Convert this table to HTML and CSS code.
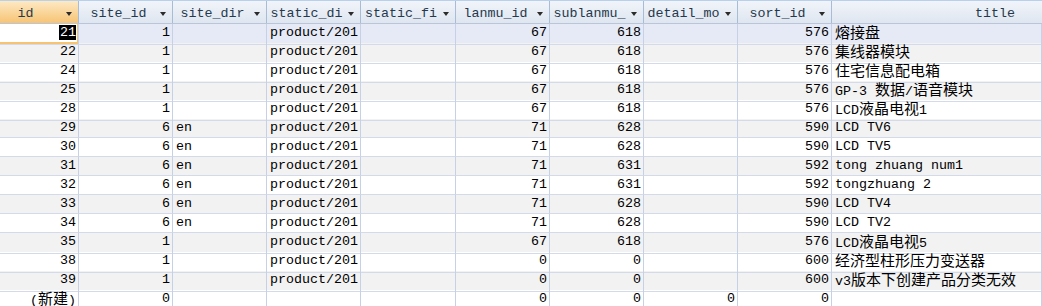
FILE: index.html
```html
<!DOCTYPE html>
<html lang="zh">
<head>
  <meta charset="UTF-8" />
  <title>product 数据表</title>
  <link rel="stylesheet" href="styles.css">
</head>
<body>
  <div class="sheet">
    <div class="row head">
      <div class="hd sel id-hd"><span class="hd-text">id</span><i class="arrow"></i></div>
      <div class="hd"><span class="hd-text">site_id</span><i class="arrow"></i></div>
      <div class="hd"><span class="hd-text">site_dir</span><i class="arrow"></i></div>
      <div class="hd"><span class="hd-text">static_di</span><i class="arrow"></i></div>
      <div class="hd"><span class="hd-text">static_fi</span><i class="arrow"></i></div>
      <div class="hd"><span class="hd-text">lanmu_id</span><i class="arrow"></i></div>
      <div class="hd"><span class="hd-text">sublanmu_</span><i class="arrow"></i></div>
      <div class="hd"><span class="hd-text">detail_mo</span><i class="arrow"></i></div>
      <div class="hd"><span class="hd-text">sort_id</span><i class="arrow"></i></div>
      <div class="hd last"><span class="hd-text">title</span></div>
    </div>

    <div class="row current">
      <div class="cell num focus"><span class="mark">21</span></div>
      <div class="cell num">1</div><div class="cell"></div><div class="cell">product/201</div><div class="cell"></div>
      <div class="cell num">67</div><div class="cell num">618</div><div class="cell"></div><div class="cell num">576</div>
      <div class="cell"><span class="zh">熔接盘</span></div>
    </div>
    <div class="row alt">
      <div class="cell num">22</div>
      <div class="cell num">1</div><div class="cell"></div><div class="cell">product/201</div><div class="cell"></div>
      <div class="cell num">67</div><div class="cell num">618</div><div class="cell"></div><div class="cell num">576</div>
      <div class="cell"><span class="zh">集线器模块</span></div>
    </div>
    <div class="row">
      <div class="cell num">24</div>
      <div class="cell num">1</div><div class="cell"></div><div class="cell">product/201</div><div class="cell"></div>
      <div class="cell num">67</div><div class="cell num">618</div><div class="cell"></div><div class="cell num">576</div>
      <div class="cell"><span class="zh">住宅信息配电箱</span></div>
    </div>
    <div class="row alt">
      <div class="cell num">25</div>
      <div class="cell num">1</div><div class="cell"></div><div class="cell">product/201</div><div class="cell"></div>
      <div class="cell num">67</div><div class="cell num">618</div><div class="cell"></div><div class="cell num">576</div>
      <div class="cell">GP-3 <span class="zh">数据</span>/<span class="zh">语音模块</span></div>
    </div>
    <div class="row">
      <div class="cell num">28</div>
      <div class="cell num">1</div><div class="cell"></div><div class="cell">product/201</div><div class="cell"></div>
      <div class="cell num">67</div><div class="cell num">618</div><div class="cell"></div><div class="cell num">576</div>
      <div class="cell">LCD<span class="zh">液晶电视</span>1</div>
    </div>
    <div class="row alt">
      <div class="cell num">29</div>
      <div class="cell num">6</div><div class="cell">en</div><div class="cell">product/201</div><div class="cell"></div>
      <div class="cell num">71</div><div class="cell num">628</div><div class="cell"></div><div class="cell num">590</div>
      <div class="cell">LCD TV6</div>
    </div>
    <div class="row">
      <div class="cell num">30</div>
      <div class="cell num">6</div><div class="cell">en</div><div class="cell">product/201</div><div class="cell"></div>
      <div class="cell num">71</div><div class="cell num">628</div><div class="cell"></div><div class="cell num">590</div>
      <div class="cell">LCD TV5</div>
    </div>
    <div class="row alt">
      <div class="cell num">31</div>
      <div class="cell num">6</div><div class="cell">en</div><div class="cell">product/201</div><div class="cell"></div>
      <div class="cell num">71</div><div class="cell num">631</div><div class="cell"></div><div class="cell num">592</div>
      <div class="cell">tong zhuang num1</div>
    </div>
    <div class="row">
      <div class="cell num">32</div>
      <div class="cell num">6</div><div class="cell">en</div><div class="cell">product/201</div><div class="cell"></div>
      <div class="cell num">71</div><div class="cell num">631</div><div class="cell"></div><div class="cell num">592</div>
      <div class="cell">tongzhuang 2</div>
    </div>
    <div class="row alt">
      <div class="cell num">33</div>
      <div class="cell num">6</div><div class="cell">en</div><div class="cell">product/201</div><div class="cell"></div>
      <div class="cell num">71</div><div class="cell num">628</div><div class="cell"></div><div class="cell num">590</div>
      <div class="cell">LCD TV4</div>
    </div>
    <div class="row">
      <div class="cell num">34</div>
      <div class="cell num">6</div><div class="cell">en</div><div class="cell">product/201</div><div class="cell"></div>
      <div class="cell num">71</div><div class="cell num">628</div><div class="cell"></div><div class="cell num">590</div>
      <div class="cell">LCD TV2</div>
    </div>
    <div class="row alt">
      <div class="cell num">35</div>
      <div class="cell num">1</div><div class="cell"></div><div class="cell">product/201</div><div class="cell"></div>
      <div class="cell num">67</div><div class="cell num">618</div><div class="cell"></div><div class="cell num">576</div>
      <div class="cell">LCD<span class="zh">液晶电视</span>5</div>
    </div>
    <div class="row">
      <div class="cell num">38</div>
      <div class="cell num">1</div><div class="cell"></div><div class="cell">product/201</div><div class="cell"></div>
      <div class="cell num">0</div><div class="cell num">0</div><div class="cell"></div><div class="cell num">600</div>
      <div class="cell"><span class="zh">经济型柱形压力变送器</span></div>
    </div>
    <div class="row alt">
      <div class="cell num">39</div>
      <div class="cell num">1</div><div class="cell"></div><div class="cell">product/201</div><div class="cell"></div>
      <div class="cell num">0</div><div class="cell num">0</div><div class="cell"></div><div class="cell num">600</div>
      <div class="cell">v3<span class="zh">版本下创建产品分类无效</span></div>
    </div>
    <div class="row">
      <div class="cell num">(<span class="zh">新建</span>)</div>
      <div class="cell num">0</div><div class="cell"></div><div class="cell"></div><div class="cell"></div>
      <div class="cell num">0</div><div class="cell num">0</div><div class="cell num">0</div><div class="cell num">0</div>
      <div class="cell"></div>
    </div>
  </div>
</body>
</html>
```

FILE: styles.css
```css
body {
  margin: 0;
  background: #fff;
  overflow: hidden;
  font-family: 'Liberation Mono', 'Noto Sans CJK SC', monospace;
  font-size: 13.33px;
  color: #000;
}

.row {
  display: grid;
  grid-template-columns: 79px 94px 94px 94px 95px 94px 94px 94px 94px 1fr;
  height: 19px;
  background: #fff;
}

.row.alt {
  background: #f2f2f2;
}

.row.current {
  background: #e6eaf6;
}

.row.head {
  height: 24px;
  background: linear-gradient(to bottom, #f1f4fa, #dfe6f0);
  border-top: 1px solid #b7d0ec;
  border-bottom: 1px solid #b9c6d9;
  box-sizing: border-box;
}

.hd {
  position: relative;
  border-right: 1px solid #a9bcd6;
  padding: 4px 17px 0 3px;
  white-space: nowrap;
  text-align: center;
  color: #25394d;
  line-height: 18px;
}

.hd.id-hd {
  padding-right: 30px;
}

.hd.last {
  border-right: none;
  text-align: right;
  padding-right: 27px;
}

.hd.sel {
  background: linear-gradient(to bottom, #fde9c4, #f7c474);
}

.arrow {
  position: absolute;
  right: 6px;
  top: 11px;
  width: 0;
  height: 0;
  border-left: 3px solid transparent;
  border-right: 3px solid transparent;
  border-top: 4px solid #2b2b2b;
}

.cell {
  box-sizing: border-box;
  border-right: 1px solid #c6d1e5;
  border-bottom: 1px solid #d3dbea;
  padding: 0 3px;
  line-height: 18px;
  white-space: nowrap;
}

.cell.num {
  text-align: right;
  padding: 0 2px 0 0;
}

.cell.focus {
  background: #fff;
  box-shadow: inset -1px -2px 0 #f8c370;
}

.mark {
  background: #000;
  color: #fff;
  display: inline-block;
  line-height: 15px;
  padding: 0 0 0 1px;
}

.zh {
  font-family: 'Noto Sans CJK SC', sans-serif;
  font-size: 15px;
  line-height: 1;
}
```
